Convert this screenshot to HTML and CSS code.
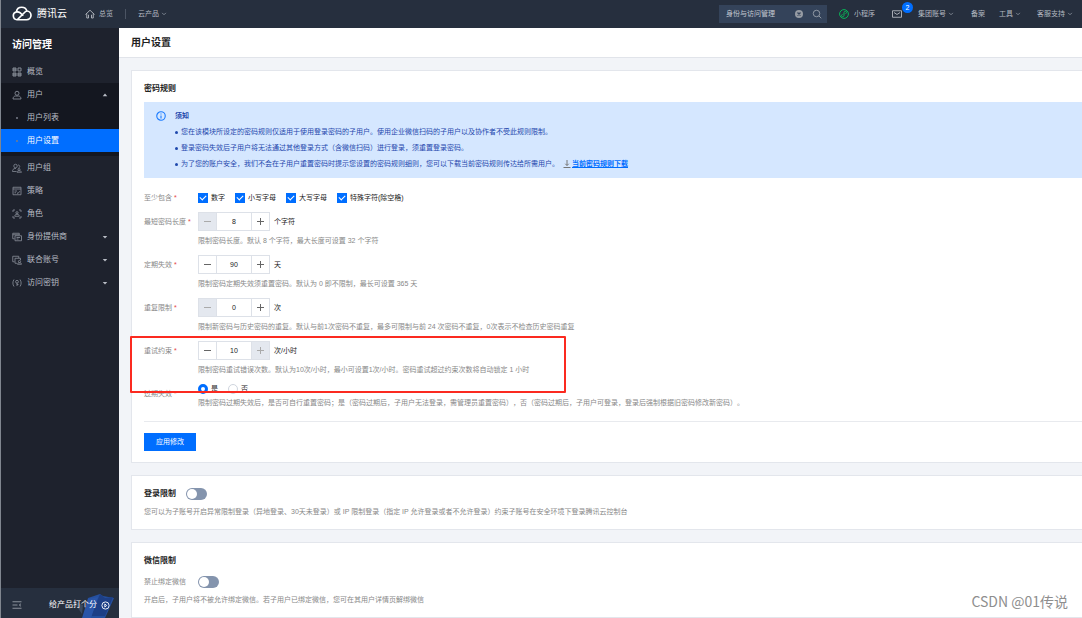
FILE: index.html
```html
<!DOCTYPE html>
<html lang="zh-CN">
<head>
<meta charset="utf-8">
<title>用户设置 - 访问管理</title>
<link rel="stylesheet" href="styles.css">
</head>
<body>
<svg class="defs" aria-hidden="true">
  <symbol id="down" viewBox="0 0 8 8"><path d="M1.5 2.5 4 5 6.5 2.5" fill="none" stroke="currentColor" stroke-width="1.2"/></symbol>
  <symbol id="caret" viewBox="0 0 8 8"><path d="M1 2.5h6L4 6z" fill="currentColor"/></symbol>
</svg>
<header class="topbar">
  <a class="brand" href="#">
    <svg class="logo" viewBox="0 0 40 30" fill="none" stroke="#fff" stroke-width="3.4" stroke-linejoin="round"><path d="M10 27.500a8 8 0 0 1-1-15.800C9.500 6 14 2.500 19.500 2.500c5 0 9 3 10.300 7.500 4.500.2 8.200 4 8.200 8.700 0 5-3.800 8.800-8.800 8.800z"/><path d="M9 11.700c3-.5 5.500.4 7.500 2.200l6 5.600M11 27 24 14c2-2.500 4-3.800 6-4"/></svg>
    <span>腾讯云</span>
  </a>
  <a class="home" href="#">
    <svg class="i10" viewBox="0 0 20 20" fill="none" stroke="currentColor" stroke-width="1.8"><path d="M1 11 10 2.500l9 8.500M3.500 9v9H7M16.500 9v9H13M7 18v-6h1M13 18v-6h-1"/></svg>
    总览
  </a>
  <span class="sep"></span>
  <a class="products" href="#">云产品<svg class="chev"><use href="#down"/></svg></a>
  <form class="search">
    <input type="text" value="身份与访问管理" aria-label="搜索">
    <button type="button" aria-label="清除"><svg class="i10" viewBox="0 0 20 20"><circle cx="10" cy="10" r="8" fill="#969ba3"/><path d="m7 7 6 6m0-6-6 6" stroke="#34435a" stroke-width="2.500"/></svg></button>
    <button type="button" aria-label="搜索"><svg class="i10" viewBox="0 0 20 20" fill="none" stroke="#9aa1ac" stroke-width="1.800"><circle cx="9" cy="9" r="6.500"/><path d="m14 14 4.500 4.500"/></svg></button>
  </form>
  <nav class="toplinks">
    <a class="mini" href="#"><svg class="i10" viewBox="0 0 20 20" fill="none" stroke="#09b558" stroke-width="2"><circle cx="10" cy="10" r="8.800"/><path d="M10 12.500c0 2-1.300 3-2.700 3S5 14.300 5 13s1-2 2-2m3 1.500v-5c0-2 1.300-3 2.700-3S15 5.700 15 7s-1 2-2 2"/></svg>小程序</a>
    <a class="mail" href="#" aria-label="消息"><svg class="i10" viewBox="0 0 20 20" fill="none" stroke="currentColor" stroke-width="1.800"><path d="M1 3.500h18v13H1zM4 7l6 4 6-4"/></svg><span class="badge">2</span></a>
    <a class="group" href="#">集团账号<svg class="chev"><use href="#down"/></svg></a>
    <a class="beian" href="#">备案</a>
    <a class="tools" href="#">工具<svg class="chev"><use href="#down"/></svg></a>
    <a href="#">客服支持<svg class="chev"><use href="#down"/></svg></a>
  </nav>
</header>
<div class="layout">
  <aside class="sidebar">
    <h2>访问管理</h2>
    <nav class="menu">
      <a href="#"><svg class="i10" viewBox="0 0 20 20" fill="none" stroke="currentColor" stroke-width="2"><path d="M2 2h6v6H2zM12 2h6v6h-6zM2 12h6v6H2zM12 12h6v6h-6z"/><path d="M2 4h6M2 6h6M12 14h6M12 16h6M2 14h6M2 16h6"/></svg><span>概览</span></a>
      <div class="open">
        <a href="#"><svg class="i10" viewBox="0 0 20 20" fill="none" stroke="currentColor" stroke-width="1.800"><circle cx="10" cy="6.500" r="4"/><path d="M2 18c0-4 2.500-6 5-6h6c2.500 0 5 2 5 6z"/></svg><span>用户</span><svg class="caret up"><use href="#caret"/></svg></a>
        <a href="#"><i class="dot"></i><span>用户列表</span></a>
        <a class="active" href="#"><i class="dot"></i><span>用户设置</span></a>
      </div>
      <a href="#"><svg class="i10" viewBox="0 0 20 20" fill="none" stroke="currentColor" stroke-width="1.600"><circle cx="7" cy="6" r="3.500"/><path d="M9 17H1c0-3.500 2-6 5-6h2M12 4c2.500 0 3.500 1.500 3.500 3S14 10 13 10"/><circle cx="14" cy="13" r="2"/><path d="M10 18.500c0-2 1.500-3 4-3s5 1 5 3z"/></svg><span>用户组</span></a>
      <a href="#"><svg class="i10" viewBox="0 0 20 20" fill="none" stroke="currentColor" stroke-width="1.700"><path d="M2 2.500h16v15H2zM2 6h16M5 10h5M5 13.500h3M10 13.500l2 1.500 3.500-4.500"/></svg><span>策略</span></a>
      <a href="#"><svg class="i10" viewBox="0 0 20 20" fill="none" stroke="currentColor" stroke-width="1.700"><path d="M2 6V2h4M14 2h4v4M18 14v4h-4M6 18H2v-4"/><circle cx="10" cy="7.500" r="2.200"/><path d="M5.500 14.500c0-2.500 1.500-4 4.500-4s4.500 1.500 4.500 4z"/></svg><span>角色</span></a>
      <a href="#"><svg class="i10" viewBox="0 0 20 20" fill="none" stroke="currentColor" stroke-width="1.700"><path d="M5 13.500H1.500v-11h13V6M1.500 5.500h13M6 7.500h13v10H6zM9 11h7M9 14h4"/></svg><span>身份提供商</span><svg class="caret"><use href="#caret"/></svg></a>
      <a href="#"><svg class="i10" viewBox="0 0 20 20" fill="none" stroke="currentColor" stroke-width="1.700"><path d="M5 13.500H1.500v-11h12V6M10 16.500H6v-10h11V10"/><circle cx="15" cy="13" r="2.200"/><path d="M11 18.500c0-2 1.500-3 4-3s4 1 4 3z"/></svg><span>联合账号</span><svg class="caret"><use href="#caret"/></svg></a>
      <a href="#"><svg class="i10" viewBox="0 0 20 20" fill="none" stroke="currentColor" stroke-width="1.700"><path d="M4 3C1 7 1 13 4 17M16 3c3 4 3 10 0 14"/><circle cx="10" cy="7.500" r="2.800"/><path d="M10 10v6M10 13h3"/></svg><span>访问密钥</span><svg class="caret"><use href="#caret"/></svg></a>
    </nav>
    <div class="rate">
      <button type="button" class="fold" aria-label="收起菜单"><svg class="i10" viewBox="0 0 20 20" fill="none" stroke="currentColor" stroke-width="1.600"><path d="M1 3.500h18M1 10h10M1 16.500h18M18 7.500 14.500 10l3.500 2.500"/></svg></button>
      <svg class="folder" viewBox="0 0 48 26"><path d="M4 9 14 13 13 22z" fill="#3b4a60"/><path d="M19 6 31 2l3 2 11 2-9 20H14z" fill="#25509f"/><path d="m31 2-9 22h14l8-19-8 1z" fill="#1d3f86"/><path d="m19 7-6 19h9l7-21z" fill="#2a55a8"/></svg>
      <a href="#">给产品打个分<svg class="go" viewBox="0 0 20 20" fill="none" stroke="currentColor" stroke-width="2"><circle cx="10" cy="10" r="8"/><path d="m8.500 6.500 4 3.500-4 3.500z"/></svg></a>
    </div>
  </aside>
  <main>
    <h1>用户设置</h1>
    <div class="cards">
      <section class="card">
        <h3>密码规则</h3>
        <div class="notice">
          <svg class="i10" viewBox="0 0 20 20" fill="none" stroke="#1a7bff" stroke-width="2.200"><circle cx="10" cy="10" r="8.500"/><path d="M10 9v6M10 5v2.200"/></svg>
          <div>
            <strong>须知</strong>
            <ul>
              <li>您在该模块所设定的密码规则仅适用于使用登录密码的子用户。使用企业微信扫码的子用户以及协作者不受此规则限制。</li>
              <li>登录密码失效后子用户将无法通过其他登录方式（含微信扫码）进行登录，须重置登录密码。</li>
              <li>为了您的账户安全，我们不会在子用户重置密码时提示您设置的密码规则细则，您可以下载当前密码规则传达给所需用户。<svg class="dl" viewBox="0 0 16 16" fill="none" stroke="#777" stroke-width="2"><path d="M8 0v11M4.500 7.500 8 11l3.500-3.500M1 15h14"/></svg><a href="#">当前密码规则下载</a></li>
            </ul>
          </div>
        </div>
        <form class="rules">
          <div class="row">
            <span class="label">至少包含<b>*</b></span>
            <div class="line checks">
              <label><input type="checkbox" checked>数字</label>
              <label><input type="checkbox" checked>小写字母</label>
              <label><input type="checkbox" checked>大写字母</label>
              <label><input type="checkbox" checked>特殊字符(除空格)</label>
            </div>
          </div>
          <div class="row">
            <label class="label" for="len">最短密码长度<b>*</b></label>
            <div>
              <div class="line"><span class="stepper"><button type="button" class="minus" disabled aria-label="减少"></button><input id="len" type="text" value="8"><button type="button" class="plus" aria-label="增加"></button></span>个字符</div>
              <p>限制密码长度。默认 8 个字符，最大长度可设置 32 个字符</p>
            </div>
          </div>
          <div class="row">
            <label class="label" for="exp">定期失效<b>*</b></label>
            <div>
              <div class="line"><span class="stepper"><button type="button" class="minus" aria-label="减少"></button><input id="exp" type="text" value="90"><button type="button" class="plus" aria-label="增加"></button></span>天</div>
              <p>限制密码定期失效须重置密码。默认为 0 即不限制，最长可设置 365 天</p>
            </div>
          </div>
          <div class="row">
            <label class="label" for="rep">重复限制<b>*</b></label>
            <div>
              <div class="line"><span class="stepper"><button type="button" class="minus" disabled aria-label="减少"></button><input id="rep" type="text" value="0"><button type="button" class="plus" aria-label="增加"></button></span>次</div>
              <p>限制新密码与历史密码的重复。默认与前1次密码不重复，最多可限制与前 24 次密码不重复，0次表示不检查历史密码重复</p>
            </div>
          </div>
          <div class="row marked">
            <label class="label" for="retry">重试约束<b>*</b></label>
            <div>
              <div class="line"><span class="stepper"><button type="button" class="minus" aria-label="减少"></button><input id="retry" type="text" value="10"><button type="button" class="plus" disabled aria-label="增加"></button></span>次/小时</div>
              <p>限制密码重试错误次数。默认为10次/小时，最小可设置1次/小时。密码重试超过约束次数将自动锁定 1 小时</p>
            </div>
          </div>
          <div class="row">
            <span class="label">过期失效<b>*</b></span>
            <div>
              <div class="checks radios">
                <label><input type="radio" name="over" checked>是</label>
                <label><input type="radio" name="over">否</label>
              </div>
              <p>限制密码过期失效后，是否可自行重置密码；是（密码过期后，子用户无法登录，需管理员重置密码），否（密码过期后，子用户可登录，登录后强制根据旧密码修改新密码）。</p>
            </div>
          </div>
          <div class="actions"><button type="button">应用修改</button></div>
        </form>
      </section>
      <section class="card">
        <h3><label for="login">登录限制</label><input id="login" class="switch" type="checkbox" role="switch"></h3>
        <p class="desc">您可以为子账号开启异常限制登录（异地登录、30天未登录）或 IP 限制登录（指定 IP 允许登录或者不允许登录）约束子账号在安全环境下登录腾讯云控制台</p>
      </section>
      <section class="card">
        <h3>微信限制</h3>
        <div class="bind"><label for="wx">禁止绑定微信</label><input id="wx" class="switch" type="checkbox" role="switch"></div>
        <p class="desc">开启后，子用户将不被允许绑定微信。若子用户已绑定微信，您可在其用户详情页解绑微信</p>
      </section>
    </div>
  </main>
</div>
<div class="watermark">CSDN @01传说</div>
</body>
</html>
```

FILE: styles.css
```css
*, *::before, *::after { box-sizing: border-box; }
body {
  margin: 0;
  min-height: 100vh;
  display: flex;
  flex-direction: column;
  position: relative;
  border-left: 1px solid #80868f;
  background: #f2f4f8;
  color: #222;
  font: 7px/12px "Liberation Sans", "Noto Sans CJK SC", sans-serif;
  text-spacing-trim: space-all;
  white-space: nowrap;
  overflow-x: hidden;
}
h1, h2, h3, p, ul { margin: 0; padding: 0; }
a { color: inherit; text-decoration: none; }
button, input { font: inherit; color: inherit; margin: 0; padding: 0; border: 0; border-radius: 0; background: none; }
svg { display: block; flex: none; }
.defs { display: none; }
.i10 { width: 10px; height: 10px; }

.topbar { height: 28px; flex: none; display: flex; align-items: center; padding: 0 9px 1px 11px; background: #262f3e; color: #b4b9c1; }
.topbar a { display: flex; align-items: center; }
.topbar .brand { gap: 5px; color: #fff; font-size: 10px; margin-right: 18px; }
.logo { width: 20px; height: 15px; }
.home { gap: 4px; }
.sep { width: 1px; height: 10px; margin: 0 12px; background: #4b5463; }
.chev { width: 6px; height: 6px; margin-left: 2px; color: #858c98; }
.search { display: flex; align-items: center; width: 108px; height: 18px; margin-left: auto; padding: 0 5px 0 7px; gap: 8px; background: #34435a; }
.search input { flex: 1; min-width: 0; color: #c5cad2; }
.toplinks { display: flex; align-items: center; margin-left: 12px; }
.mini { gap: 5px; margin-right: 17px; }
.mail { position: relative; margin-right: 16px; }
.badge { position: absolute; left: 10px; top: -7px; width: 11px; height: 11px; border-radius: 50%; background: #006eff; color: #fff; line-height: 11px; text-align: center; }
.group { margin-right: 17px; }
.beian { margin-right: 14px; }
.tools { margin-right: 16px; }

.layout { flex: 1; display: flex; }
.sidebar { width: 118px; flex: none; display: flex; flex-direction: column; background: #1e222d; color: #b9bdc5; font-size: 8px; }
.sidebar h2 { padding: 11px 11px 9px; font-size: 10px; line-height: 12px; color: #fff; }
.menu { flex: 1; }
.menu a { display: flex; align-items: center; height: 23px; padding: 0 11px; gap: 5px; }
.menu .i10 { color: #848a95; }
.menu span { flex: 1; }
.caret { width: 6px; height: 6px; }
.up { transform: rotate(180deg); }
.open { padding-bottom: 4px; background: #141720; }
.dot { width: 10px; display: flex; justify-content: center; }
.dot::before { content: ""; width: 2px; height: 2px; border-radius: 50%; background: #777d88; }
.menu .active { background: #006eff; color: #fff; }
.rate { position: relative; display: flex; align-items: center; justify-content: space-between; height: 30px; padding: 4px 9px 0 11px; background: #262f3e; color: #fff; }
.rate a { position: relative; display: flex; align-items: center; gap: 4px; }
.rate button { color: #a3a9b3; }
.folder { position: absolute; right: 2px; bottom: 0; width: 48px; height: 26px; }
.go { width: 9px; height: 9px; }

main { flex: 1; min-width: 0; display: flex; flex-direction: column; }
h1 { padding: 9px 12px 8px; border-bottom: 1px solid #e1e4ea; background: #fff; font-size: 10px; line-height: 12px; }
.cards { display: flex; flex-direction: column; gap: 12px; padding: 12px 0 0 12px; }
.card { padding: 12px 0 11px 12px; border: 1px solid #e3e6ec; border-right: 0; background: #fff; }
h3 { display: flex; align-items: center; gap: 10px; font-size: 8px; line-height: 12px; }
.notice { display: flex; gap: 9px; margin-top: 7px; padding: 6px 12px; background: #d5e7ff; color: #1f48ad; line-height: 16px; }
.notice .i10 { margin-top: 3px; }
.notice strong { display: block; }
.notice ul { list-style: none; }
.notice li { display: flex; align-items: center; }
.notice li::before { content: ""; width: 3px; height: 3px; margin-right: 3px; border-radius: 50%; background: #1f48ad; }
.notice a { color: #006eff; font-weight: bold; text-decoration: underline; }
.dl { width: 8px; height: 8px; margin: 0 1px 0 4px; }

.rules { display: flex; flex-direction: column; gap: 5px; margin-top: 10px; line-height: 19px; }
.row { display: grid; grid-template-columns: 54px 1fr; position: relative; }
.label, .rules p, .desc, .bind { color: #888; }
.label b { margin-left: 2px; color: #e54545; font-weight: normal; }
.line { display: flex; align-items: center; gap: 4px; height: 19px; }
.checks { display: flex; gap: 10px; }
.checks label { display: flex; align-items: center; gap: 3px; }
.checks input { appearance: none; width: 10px; height: 10px; border: 1px solid #cfd5de; }
.checks input[type="checkbox"]:checked { border: 0; background: #006eff; display: grid; place-items: center; }
.checks input[type="checkbox"]:checked::before { content: ""; width: 6px; height: 4px; border: solid #fff; border-width: 0 0 1px 1px; transform: translateY(-1px) rotate(-45deg); }
.radios { height: 9px; }
.checks input[type="radio"] { border-radius: 50%; background: #fff; }
.checks input[type="radio"]:checked { border: 3px solid #006eff; }
.stepper { display: flex; width: 72px; height: 19px; border: 1px solid #dde1e8; }
.stepper input { flex: 1; min-width: 0; text-align: center; border: solid #dde1e8; border-width: 0 1px; }
.stepper button { width: 17px; display: grid; place-items: center; color: #666; }
.stepper button:disabled { background: #e4e8ef; color: #aaa; }
.stepper button::before, .plus::after { content: ""; grid-area: 1 / 1; width: 7px; height: 1px; background: currentColor; }
.stepper .plus::after { width: 1px; height: 7px; }
.marked::after { content: ""; position: absolute; z-index: 1; left: -14px; top: -5px; width: 436px; height: 57px; border: 2px solid #fb2a20; border-radius: 1px; }
.actions { margin-top: 4px; padding-top: 11px; border-top: 1px solid #e8eaee; }
.actions button { display: block; padding: 0 12px; height: 18px; line-height: 18px; background: #006eff; color: #fff; }
.switch { appearance: none; width: 21px; height: 12px; padding: 1px; border-radius: 6px; background: #8494ad; }
.switch::before { content: ""; display: block; width: 10px; height: 10px; border-radius: 50%; background: #fff; }
.desc { margin-top: 6px; }
.bind { display: grid; grid-template-columns: 54px 1fr; align-items: center; margin-top: 9px; }
.watermark { position: absolute; right: 14px; bottom: 8px; color: #8e8e8e; font: 14px/18px "Noto Sans CJK SC", sans-serif; }
```
